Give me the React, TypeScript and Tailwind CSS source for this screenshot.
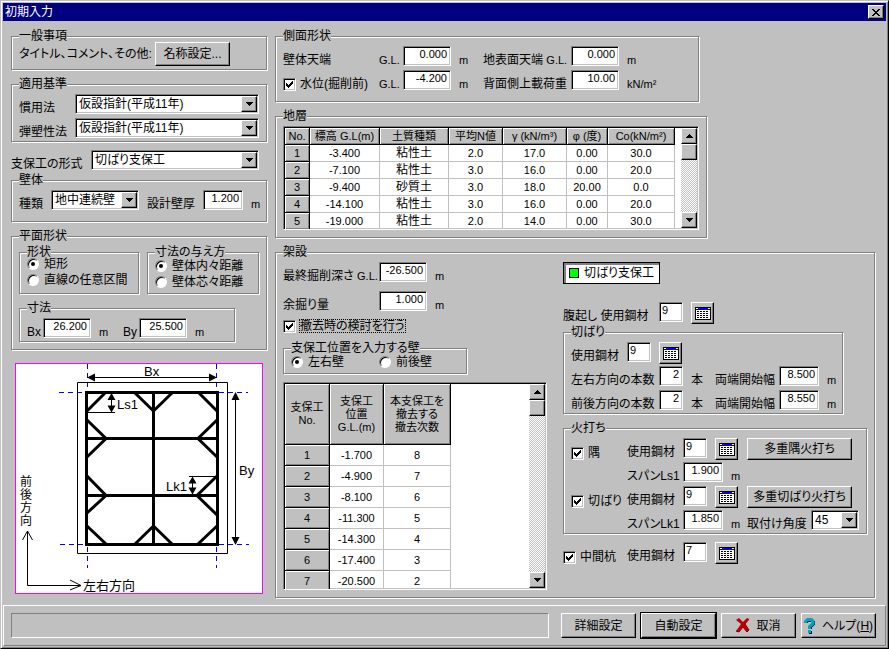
import type { ReactNode } from "react";
import clsx from "clsx";

const sunken = "border border-t-[#808080] border-l-[#808080] border-r-white border-b-white shadow-[inset_1px_1px_0_#000,inset_-1px_-1px_0_#c0c0c0]";
const raised = "border border-t-white border-l-white border-r-black border-b-black bg-[#c0c0c0] shadow-[inset_-1px_-1px_0_#808080]";

const strata = [
  ["-3.400", "粘性土", "2.0", "17.0", "0.00", "30.0"],
  ["-7.100", "粘性土", "3.0", "16.0", "0.00", "20.0"],
  ["-9.400", "砂質土", "3.0", "18.0", "20.00", "0.0"],
  ["-14.100", "粘性土", "3.0", "16.0", "0.00", "20.0"],
  ["-19.000", "粘性土", "2.0", "14.0", "0.00", "30.0"],
];

const supports = [
  ["-1.700", "8"],
  ["-4.900", "7"],
  ["-8.100", "6"],
  ["-11.300", "5"],
  ["-14.300", "4"],
  ["-17.400", "3"],
  ["-20.500", "2"],
];

type GroupProps = { title: string; className?: string; children: ReactNode };

const Group = ({ title, className, children }: GroupProps) => (
  <fieldset className={clsx("min-w-0 border border-[#808080] px-[7px] shadow-[1px_1px_0_#fff,inset_1px_1px_0_#fff]", className)}>
    <legend className="bg-[#c0c0c0] leading-3">{title}</legend>
    {children}
  </fieldset>
);

type FieldProps = { id: string; value: string; className?: string };

const NumberInput = ({ id, value, className = "w-12" }: FieldProps) => (
  <input
    id={id}
    type="text"
    defaultValue={value}
    className={clsx("h-5 shrink-0 rounded-none bg-white pr-[3px] pb-1 text-right text-[11px] leading-3 outline-none", sunken, className)}
  />
);

const SteelInput = ({ id, value }: FieldProps) => (
  <input
    id={id}
    type="text"
    defaultValue={value}
    className={clsx("h-5 w-6 shrink-0 rounded-none bg-white pb-1 pl-0.5 text-[11px] leading-3 outline-none", sunken)}
  />
);

const Unit = ({ children = "m", className = "w-8" }: { children?: ReactNode; className?: string }) => (
  <span className={clsx("shrink-0 pl-2 text-[11px]", className)}>{children}</span>
);

const Arrow = ({ up }: { up?: boolean }) => (
  <svg width="7" height="4" viewBox="0 0 7 4" shapeRendering="crispEdges">
    <path d={up ? "M3 0h1v1h1v1h1v1h1v1H0V3h1V2h1V1h1z" : "M0 0h7v1H6v1H5v1H4v1H3V3H2V2H1V1H0z"} />
  </svg>
);

const Combo = ({ id, options, className }: { id: string; options: string[]; className?: string }) => (
  <div className={clsx("grid h-5 bg-white p-px", sunken, className)}>
    <select id={id} className="col-start-1 row-start-1 w-full appearance-none bg-transparent pl-0.5 leading-4 outline-none">
      {options.map((option) => (
        <option key={option}>{option}</option>
      ))}
    </select>
    <span className={clsx("pointer-events-none col-start-1 row-start-1 flex w-4 items-center justify-center justify-self-end", raised)}>
      <Arrow />
    </span>
  </div>
);

const Radio = ({ name, label, checked }: { name: string; label: string; checked?: boolean }) => (
  <label className="flex h-3 items-center gap-[5px] whitespace-nowrap">
    <span className="grid place-items-center">
      <input
        type="radio"
        name={name}
        defaultChecked={checked}
        className="peer col-start-1 row-start-1 size-3 appearance-none rounded-full border border-t-[#808080] border-l-[#808080] border-r-white border-b-white bg-white shadow-[inset_1px_1px_0_#000]"
      />
      <span className="pointer-events-none invisible col-start-1 row-start-1 size-1 rounded-full bg-black peer-checked:visible" />
    </span>
    {label}
  </label>
);

const Check = ({ label, className, focused }: { label: string; className?: string; focused?: boolean }) => (
  <label className={clsx("flex items-center gap-[3px] whitespace-nowrap", className)}>
    <span className="grid place-items-center">
      <input type="checkbox" defaultChecked className={clsx("peer col-start-1 row-start-1 size-[13px] appearance-none bg-white", sunken)} />
      <svg width="7" height="7" viewBox="0 0 7 7" shapeRendering="crispEdges" className="pointer-events-none invisible col-start-1 row-start-1 peer-checked:visible">
        <path d="M0 2h1v1h1v1h1V3h1V2h1V1h1V0h1v3H6v1H5v1H4v1H3v1H2V6H1V5H0z" />
      </svg>
    </span>
    <span className={clsx("border", focused ? "border-dotted border-black" : "border-transparent")}>{label}</span>
  </label>
);

const SteelButton = () => (
  <button type="button" aria-label="鋼材一覧" className={clsx("ml-2 flex h-[22px] w-[23px] shrink-0 items-center justify-center", raised)}>
    <svg width="16" height="13" viewBox="0 0 16 13" shapeRendering="crispEdges">
      <path d="M0 0h16v13H0z" />
      <path fill="#fff" d="M1 1h2v1H1zM13 1h2v1h-2zM1 3h14v9H1z" />
      <path fill="#00f" d="M3 1h10v2H3z" />
      <path stroke="#000" strokeDasharray="2 1" d="M2 4.500h12M2 6.500h12M2 8.500h12M2 10.500h12" />
    </svg>
  </button>
);

const Button = ({ children, className }: { children: ReactNode; className?: string }) => (
  <button type="button" className={clsx("flex shrink-0 items-center justify-center whitespace-nowrap", raised, className)}>
    {children}
  </button>
);

const ScrollBar = () => (
  <div className="flex w-4 shrink-0 flex-col bg-[repeating-conic-gradient(#fff_0_25%,#c0c0c0_0_50%)] bg-[length:2px_2px]">
    <button type="button" aria-label="上へ" className={clsx("flex h-4 items-center justify-center", raised)}>
      <Arrow up />
    </button>
    <div className={clsx("h-4", raised)} />
    <button type="button" aria-label="下へ" className={clsx("mt-auto flex h-4 items-center justify-center", raised)}>
      <Arrow />
    </button>
  </div>
);

const HeadCell = ({ children, className, scope = "col" }: { children: ReactNode; className?: string; scope?: string }) => (
  <th
    scope={scope}
    className={clsx(
      "border-r border-b border-black bg-[#c0c0c0] p-0 font-normal whitespace-nowrap shadow-[inset_1px_1px_0_#fff,inset_-1px_-1px_0_#808080]",
      className,
    )}
  >
    {children}
  </th>
);

const Cell = ({ children }: { children: ReactNode }) => <td className="border-r border-b border-[#c0c0c0] p-0 text-center">{children}</td>;

const Plan = () => (
  <svg width="248" height="231" viewBox="15 8 248 231" fill="none" stroke="#000" className="ml-1 mt-[13px]">
    <rect x="15.500" y="8.500" width="247" height="230" fill="#fff" stroke="#f0f" />
    <path stroke="#00f" strokeDasharray="5 4" d="M87.500 9v28M216.500 9v28M87.500 192v21M216.500 192v21M59 37.500h27M219 37.500h29M60 189.500h26M219 189.500h30" />
    <path d="M77.500 27.500h150v171h-150zM92 22.500h120M235.500 42v142M87 57.500h28M111.500 42v12M189 121.500h28M192.500 125v12" />
    <g strokeWidth="3">
      <path d="M86.500 37.500h131v152h-131zM153.500 38v151M87 83.500h130M87 140.500h130" />
      <path d="M105 38 87 56M135 38l18.500 18L172 38M199 38l18 18M87 65l19 18.500L87 102M217 65l-19 18.500 19 18.500M87 121l19 19.500L87 158M217 121l-20 19.500 20 19.500M87 171l19 18M135 189l18.500-18 18.500 18M217 171l-19 18" />
    </g>
    <g fill="#000" stroke="none">
      <path d="m87 22.500 8-4v8zM217 22.500l-8-4v8z" />
      <path d="m235.500 37-4 8h8zM235.500 190l-4-8h8z" />
      <path d="m111.500 38-4 7h8zM111.500 57.500l-4-7h8z" />
      <path d="m192.500 121.500-4 7h8zM192.500 139.500l-4-7h8z" />
    </g>
    <path d="M27.500 176v54.500H81M22.500 185l5-9 5 9M70 225l11 5.500-11 4.500" />
    <g fill="#000" stroke="none" fontSize="13">
      <text x="144" y="21">Bx</text>
      <text x="117" y="54">Ls1</text>
      <text x="166" y="136">Lk1</text>
      <text x="239" y="120">By</text>
      <text x="83" y="235">左右方向</text>
    </g>
    <g fill="#000" stroke="none" fontSize="12">
      <text x="20" y="131">前</text>
      <text x="20" y="144">後</text>
      <text x="20" y="157">方</text>
      <text x="20" y="170">向</text>
    </g>
  </svg>
);

const GeneralColumn = () => (
  <div className="flex w-64 shrink-0 flex-col">
    <Group title="一般事項" className="pb-[3px]">
      <div className="flex items-center">
        <span className="w-34 whitespace-nowrap">タイトル、コメント、その他:</span>
        <Button className="h-6 w-[75px]">名称設定...</Button>
      </div>
    </Group>

    <Group title="適用基準" className="mt-2 pb-[3px]">
      <div className="flex flex-col gap-1 pt-1">
        <div className="flex items-end">
          <label htmlFor="conventional" className="w-14">慣用法</label>
          <Combo id="conventional" options={["仮設指針(平成11年)"]} className="flex-1" />
        </div>
        <div className="flex items-end">
          <label htmlFor="elastoplastic" className="w-14">弾塑性法</label>
          <Combo id="elastoplastic" options={["仮設指針(平成11年)"]} className="flex-1" />
        </div>
      </div>
    </Group>

    <div className="mt-2 flex items-end pr-2">
      <label htmlFor="support-type" className="w-20 whitespace-nowrap">支保工の形式</label>
      <Combo id="support-type" options={["切ばり支保工"]} className="flex-1" />
    </div>

    <Group title="壁体" className="mt-1 pb-[11px]">
      <div className="flex items-end pt-1">
        <label htmlFor="wall-kind" className="w-8">種類</label>
        <Combo id="wall-kind" options={["地中連続壁"]} className="w-22" />
        <label htmlFor="wall-depth" className="ml-2 w-14">設計壁厚</label>
        <NumberInput id="wall-depth" value="1.200" className="w-10" />
        <Unit className="w-4" />
      </div>
    </Group>

    <Group title="平面形状" className="mt-2 pb-[7px]">
      <div className="flex gap-2 pt-1">
        <Group title="形状" className="w-30 pb-[7px]">
          <div className="flex flex-col gap-1">
            <Radio name="shape" label="矩形" checked />
            <Radio name="shape" label="直線の任意区間" />
          </div>
        </Group>
        <Group title="寸法の与え方" className="w-28">
          <div className="flex flex-col gap-1 pt-0.5">
            <Radio name="measure" label="壁体内々距離" checked />
            <Radio name="measure" label="壁体芯々距離" />
          </div>
        </Group>
      </div>
      <Group title="寸法" className="mt-2 w-54 pb-[3px]">
        <div className="flex items-end pt-1">
          <label htmlFor="bx" className="w-4">Bx</label>
          <NumberInput id="bx" value="26.200" />
          <Unit />
          <label htmlFor="by" className="w-4">By</label>
          <NumberInput id="by" value="25.500" />
          <Unit className="w-4" />
        </div>
      </Group>
    </Group>

    <Plan />
  </div>
);

const SideProfile = () => (
  <Group title="側面形状" className="w-106 pb-[11px]">
    <div className="flex flex-col gap-1 pt-1">
      <div className="flex items-end">
        <span className="w-24">壁体天端</span>
        <label htmlFor="wall-top" className="w-6 text-[11px]">G.L.</label>
        <NumberInput id="wall-top" value="0.000" />
        <Unit />
        <label htmlFor="ground-top" className="w-22 whitespace-nowrap">
          地表面天端 <span className="text-[11px]">G.L.</span>
        </label>
        <NumberInput id="ground-top" value="0.000" />
        <Unit />
      </div>
      <div className="flex items-end">
        <Check label="水位(掘削前)" className="h-3 w-24" />
        <label htmlFor="water-level" className="w-6 text-[11px]">G.L.</label>
        <NumberInput id="water-level" value="-4.200" />
        <Unit />
        <label htmlFor="surcharge" className="w-22 whitespace-nowrap">背面側上載荷重</label>
        <NumberInput id="surcharge" value="10.00" />
        <Unit>kN/m²</Unit>
      </div>
    </div>
  </Group>
);

const Strata = () => (
  <Group title="地層" className="mt-2 w-108 pb-[7px]">
    <div className="pt-1">
      <div className={clsx("flex h-26 justify-between overflow-hidden bg-white p-px", sunken)}>
        <table className="table-fixed border-separate border-spacing-0 text-[11px] leading-4">
          <colgroup>
            <col className="w-[25px]" />
            <col className="w-[70px]" />
            <col className="w-[69px]" />
            <col className="w-[54px]" />
            <col className="w-16" />
            <col className="w-[41px]" />
            <col className="w-[67px]" />
          </colgroup>
          <thead>
            <tr>
              {["No.", "標高 G.L(m)", "土質種類", "平均N値", "γ (kN/m³)", "φ (度)", "Co(kN/m²)"].map((head) => (
                <HeadCell key={head}>{head}</HeadCell>
              ))}
            </tr>
          </thead>
          <tbody>
            {strata.map((row, i) => (
              <tr key={row[0]}>
                <HeadCell scope="row">{i + 1}</HeadCell>
                {row.map((value, j) => (
                  <Cell key={j}>{j === 1 ? <span className="text-xs leading-4">{value}</span> : value}</Cell>
                ))}
              </tr>
            ))}
          </tbody>
        </table>
        <ScrollBar />
      </div>
    </div>
  </Group>
);

const SupportColumn = () => (
  <div className="flex w-66 shrink-0 flex-col">
    <div className="flex items-end">
      <label htmlFor="final-depth" className="w-24 whitespace-nowrap">
        最終掘削深さ <span className="text-[11px]">G.L.</span>
      </label>
      <NumberInput id="final-depth" value="-26.500" />
      <Unit />
    </div>
    <div className="mt-[9px] flex items-end">
      <label htmlFor="over-dig" className="w-24">余掘り量</label>
      <NumberInput id="over-dig" value="1.000" />
      <Unit />
    </div>
    <Check label="撤去時の検討を行う" className="mt-[7px] h-4" focused />
    <Group title="支保工位置を入力する壁" className="mt-2 w-46 pb-[5px]">
      <div className="flex pt-0.5">
        <div className="w-22">
          <Radio name="wall-side" label="左右壁" checked />
        </div>
        <Radio name="wall-side" label="前後壁" />
      </div>
    </Group>
    <div className={clsx("mt-2 flex h-52 justify-between overflow-hidden bg-white p-px", sunken)}>
      <table className="table-fixed border-separate border-spacing-0 self-start text-[11px]">
        <colgroup>
          <col className="w-[45px]" />
          <col className="w-[54px]" />
          <col className="w-[67px]" />
        </colgroup>
        <thead className="leading-[13px]">
          <tr className="h-[61px]">
            <HeadCell>支保工<br />No.</HeadCell>
            <HeadCell>支保工<br />位置<br />G.L.(m)</HeadCell>
            <HeadCell>本支保工を<br />撤去する<br />撤去次数</HeadCell>
          </tr>
        </thead>
        <tbody>
          {supports.map(([depth, order], i) => (
            <tr key={depth} className="h-[21px]">
              <HeadCell scope="row">{i + 1}</HeadCell>
              <Cell>{depth}</Cell>
              <Cell>{order}</Cell>
            </tr>
          ))}
        </tbody>
      </table>
      <ScrollBar />
    </div>
  </div>
);

const steelLabel = "flex h-5 items-end whitespace-nowrap";

const SteelColumn = () => (
  <div className="flex min-w-0 flex-1 flex-col items-start">
    <button
      type="button"
      className="flex h-[22px] w-[97px] items-center gap-[5px] border border-black bg-white pl-[5px] whitespace-nowrap shadow-[inset_1px_1px_0_#808080,inset_2px_2px_0_#808080]"
    >
      <span className="size-[10px] border border-black bg-[#0f0]" />
      切ばり支保工
    </button>

    <div className="mt-[18px] flex h-6 items-start">
      <label htmlFor="wale" className={clsx(steelLabel, "w-24")}>腹起し 使用鋼材</label>
      <SteelInput id="wale" value="9" />
      <SteelButton />
    </div>

    <Group title="切ばり" className="w-70 pb-[3px]">
      <div className="pt-1">
        <div className="flex h-6 items-start">
          <label htmlFor="strut" className={clsx(steelLabel, "w-14")}>使用鋼材</label>
          <SteelInput id="strut" value="9" />
          <SteelButton />
        </div>
        <div className="flex items-end">
          <label htmlFor="count-lr" className="w-22 whitespace-nowrap">左右方向の本数</label>
          <NumberInput id="count-lr" value="2" className="w-6" />
          <span className="w-8 pl-2">本</span>
          <label htmlFor="start-lr" className="w-16 whitespace-nowrap">両端開始幅</label>
          <NumberInput id="start-lr" value="8.500" className="w-10" />
          <Unit className="w-4" />
        </div>
        <div className="mt-1 flex items-end">
          <label htmlFor="count-fb" className="w-22 whitespace-nowrap">前後方向の本数</label>
          <NumberInput id="count-fb" value="2" className="w-6" />
          <span className="w-8 pl-2">本</span>
          <label htmlFor="start-fb" className="w-16 whitespace-nowrap">両端開始幅</label>
          <NumberInput id="start-fb" value="8.550" className="w-10" />
          <Unit className="w-4" />
        </div>
      </div>
    </Group>

    <Group title="火打ち" className="mt-2 w-76 pb-[3px]">
      <div className="pt-1">
        <div className="flex h-6 items-start">
          <Check label="隅" className="mt-[9px] h-3 w-14" />
          <label htmlFor="corner-steel" className={clsx(steelLabel, "w-14")}>使用鋼材</label>
          <SteelInput id="corner-steel" value="9" />
          <SteelButton />
          <Button className="ml-[9px] h-[22px] w-[105px]">多重隅火打ち</Button>
        </div>
        <div className="flex items-end pl-14">
          <label htmlFor="ls1" className="w-14 whitespace-nowrap">スパンLs1</label>
          <NumberInput id="ls1" value="1.900" className="w-10" />
          <Unit />
        </div>
        <div className="mt-1 flex h-6 items-start">
          <Check label="切ばり" className="mt-[9px] h-3 w-14" />
          <label htmlFor="brace-steel" className={clsx(steelLabel, "w-14")}>使用鋼材</label>
          <SteelInput id="brace-steel" value="9" />
          <SteelButton />
          <Button className="ml-[9px] h-[22px] w-[105px]">多重切ばり火打ち</Button>
        </div>
        <div className="flex items-end pl-14">
          <label htmlFor="lk1" className="w-14 whitespace-nowrap">スパンLk1</label>
          <NumberInput id="lk1" value="1.850" className="w-10" />
          <Unit className="w-6" />
          <label htmlFor="angle" className="w-16 whitespace-nowrap">取付け角度</label>
          <Combo id="angle" options={["45"]} className="w-12" />
        </div>
      </div>
    </Group>

    <div className="mt-2 flex items-start">
      <Check label="中間杭" className="mt-[9px] h-3 w-16" />
      <label htmlFor="post-steel" className={clsx(steelLabel, "w-14")}>使用鋼材</label>
      <SteelInput id="post-steel" value="7" />
      <SteelButton />
    </div>
  </div>
);

const Footer = () => (
  <footer className="flex gap-3 border border-t-white border-l-white border-r-[#808080] border-b-[#808080] pt-[7px] pr-[9px] pb-[7px] pl-[7px]">
    <div className="h-[25px] flex-1 border border-t-[#808080] border-l-[#808080] border-r-white border-b-white" />
    <div className="flex gap-[5px]">
      <Button className="h-[25px] w-[75px]">詳細設定</Button>
      <Button className="h-[25px] w-[75px] outline outline-black">自動設定</Button>
      <Button className="h-[25px] w-[75px] gap-1.5">
        <svg width="14" height="15" viewBox="0 0 14 15">
          <path fill="#c00000" d="M0 2 3 0l4 4 4-4 2 1-4 5 4 6-2 2-4-5-4 5-3-1 5-7z" />
          <path fill="none" stroke="#800000" d="m13 1-4 5 4 6-2 2-4-5-4 5-3-1" />
        </svg>
        取消
      </Button>
      <Button className="h-[25px] w-[75px] gap-1.5">
        <svg width="12" height="16" viewBox="0 0 12 16" fill="none">
          <path stroke="#000080" strokeWidth="3" d="M2.500 5V3.500L4 2.500h4L9.500 4v2L6.500 8.500V11" />
          <path fill="#000080" d="M5 13h3v3H5z" />
          <path stroke="#00a8b0" strokeWidth="3" d="M1.500 5V3.500L3.500 1.500h4L9 3.500v2L5.500 8.500V11" />
          <path fill="#00a8b0" d="M4 12h3v3H4z" />
        </svg>
        <span>
          ヘルプ(<u>H</u>)
        </span>
      </Button>
    </div>
  </footer>
);

export default function App() {
  return (
    <div className="flex min-h-screen flex-col border border-t-[#c0c0c0] border-l-[#c0c0c0] border-r-black border-b-black bg-[#c0c0c0] p-0.5 font-['Liberation_Sans','Noto_Sans_CJK_JP',sans-serif] text-xs leading-3 text-black shadow-[inset_1px_1px_0_#fff,inset_-1px_-1px_0_#808080] [font-feature-settings:'palt']">
      <header className="flex h-[18px] items-center justify-between bg-[#000080] pr-0.5 pl-0.5 text-white">
        <h1>初期入力</h1>
        <button type="button" aria-label="閉じる" className={clsx("flex h-3.5 w-4 items-center justify-center", raised)}>
          <svg width="8" height="7" viewBox="0 0 8 7" shapeRendering="crispEdges">
            <path d="M0 0h2v1h1v1h2V1h1V0h2v1H7v1H6v1H5v1h1v1h1v1h1v1H6V6H5V5H3v1H2v1H0V6h1V5h1V4h1V3H2V2H1V1H0z" />
          </svg>
        </button>
      </header>
      <main className="flex flex-1 gap-2 pt-[9px] pr-[11px] pb-[7px] pl-2">
        <GeneralColumn />
        <div className="min-w-0 flex-1">
          <SideProfile />
          <Strata />
          <Group title="架設" className="mt-2 pb-[7px]">
            <div className="flex gap-4 pt-1">
              <SupportColumn />
              <SteelColumn />
            </div>
          </Group>
        </div>
      </main>
      <Footer />
    </div>
  );
}
